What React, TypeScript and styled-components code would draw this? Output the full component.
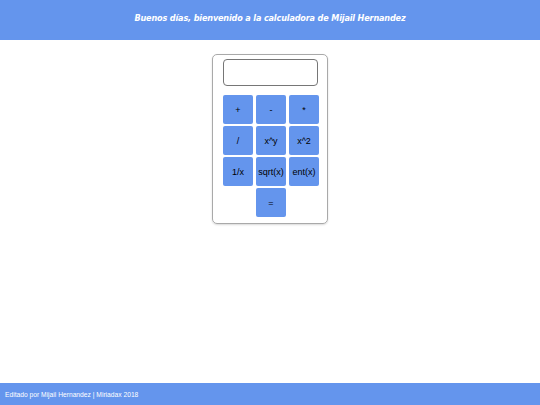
import styled, { createGlobalStyle } from 'styled-components';

const GlobalStyle = createGlobalStyle`
  html, body {
    margin: 0;
    padding: 0;
    background: #ffffff;
  }
  #root {
    min-height: 100vh;
  }
`;

const Page = styled.div`
  min-height: 100vh;
  display: flex;
  flex-direction: column;
  font-family: "Liberation Sans", Arial, sans-serif;
`;

const Header = styled.header`
  height: 40px;
  background-color: #6495ed;
  display: flex;
  align-items: center;
  justify-content: center;
`;

const Greeting = styled.h1`
  margin: 0;
  color: #ffffff;
  font-family: "DejaVu Sans Condensed", "DejaVu Sans", sans-serif;
  font-style: italic;
  font-weight: bold;
  font-size: 9px;
  letter-spacing: -0.15px;
  padding-bottom: 4px;
`;

const Main = styled.main`
  flex: 1;
  display: flex;
  justify-content: center;
  align-items: flex-start;
  padding-top: 14px;
`;

const Calculator = styled.div`
  width: 116px;
  box-sizing: border-box;
  padding: 4px 9px 6px 10px;
  border: 1px solid #a9a9a9;
  border-radius: 5px;
  box-shadow: 0 1px 2px rgba(0, 0, 0, 0.15);
  display: flex;
  flex-direction: column;
  gap: 9px;
`;

const Display = styled.input`
  width: 95px;
  height: 27px;
  box-sizing: border-box;
  border: 1px solid #767676;
  border-radius: 4px;
  margin: 0;
  padding: 0 4px;
  font-size: 12px;
`;

const Keys = styled.div`
  display: grid;
  grid-template-columns: repeat(3, 30px);
  grid-auto-rows: 29px;
  column-gap: 3px;
  row-gap: 2px;
`;

const Key = styled.button<{ $col?: number }>`
  grid-column: ${(p) => (p.$col ? `${p.$col}` : 'auto')};
  margin: 0;
  padding: 0;
  border: none;
  border-radius: 2px;
  background-color: #6495ed;
  color: #000000;
  font-family: "Liberation Sans", Arial, sans-serif;
  font-size: 9px;
  cursor: pointer;
`;

const Footer = styled.footer`
  height: 22px;
  background-color: #6495ed;
  display: flex;
  align-items: center;
  padding-left: 5px;
  color: #ffffff;
  font-size: 6.7px;
`;

const keys = ['+', '-', '*', '/', 'x^y', 'x^2', '1/x', 'sqrt(x)', 'ent(x)'];

const App = () => {
  return (
    <>
      <GlobalStyle />
      <Page>
        <Header>
          <Greeting>Buenos días, bienvenido a la calculadora de Mijail Hernandez</Greeting>
        </Header>
        <Main>
          <Calculator>
            <Display type="text" />
            <Keys>
              {keys.map((k) => (
                <Key key={k}>{k}</Key>
              ))}
              <Key $col={2}>=</Key>
            </Keys>
          </Calculator>
        </Main>
        <Footer>Editado por Mijail Hernandez | Miriadax 2018</Footer>
      </Page>
    </>
  );
};

export default App;
